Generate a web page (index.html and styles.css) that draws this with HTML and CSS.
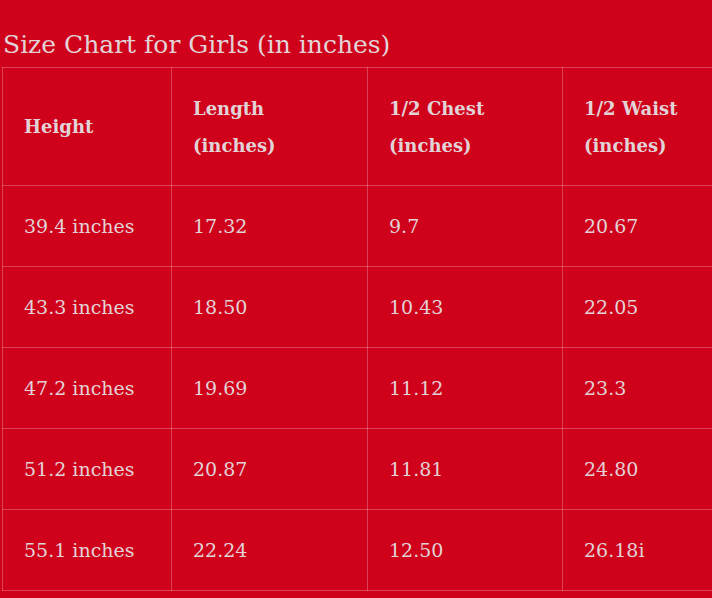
FILE: index.html
```html
<!DOCTYPE html>
<html>
<head>
<meta charset="utf-8">
<link rel="stylesheet" href="styles.css">
</head>
<body>
<div class="wrap">
  <h2 class="title">Size Chart for Girls (in inches)</h2>
  <table class="chart">
    <colgroup>
      <col class="c1"><col class="c2"><col class="c3"><col class="c4">
    </colgroup>
    <thead>
      <tr><th>Height</th><th>Length<br>(inches)</th><th>1/2 Chest<br>(inches)</th><th>1/2 Waist<br>(inches)</th></tr>
    </thead>
    <tbody>
      <tr><td>39.4 inches</td><td>17.32</td><td>9.7</td><td>20.67</td></tr>
      <tr><td>43.3 inches</td><td>18.50</td><td>10.43</td><td>22.05</td></tr>
      <tr><td>47.2 inches</td><td>19.69</td><td>11.12</td><td>23.3</td></tr>
      <tr><td>51.2 inches</td><td>20.87</td><td>11.81</td><td>24.80</td></tr>
      <tr><td>55.1 inches</td><td>22.24</td><td>12.50</td><td>26.18i</td></tr>
    </tbody>
  </table>
</div>
</body>
</html>
```
FILE: styles.css
```css
html, body {
  margin: 0;
  padding: 0;
  background: #d0011b;
  overflow: hidden;
}
.wrap {
  padding: 0 0 0 2px;
  width: 760px;
  color: #e2d3d7;
  font-family: "DejaVu Serif", "Liberation Serif", serif;
}
.title {
  margin: 0 0 7px 0;
  padding: 30px 0 0 1px;
  font-size: 25px;
  font-weight: normal;
  line-height: 30px;
}
.chart {
  border-collapse: collapse;
  table-layout: fixed;
  width: 756px;
}
.c1 { width: 169px; }
.c2 { width: 196px; }
.c3 { width: 195px; }
.c4 { width: 196px; }
.chart th, .chart td {
  border: 1px solid rgba(255, 255, 255, 0.25);
  text-align: left;
  vertical-align: middle;
  padding: 0 0 0 21px;
}
.chart th {
  height: 117px;
  font-size: 18px;
  font-weight: bold;
  line-height: 37px;
}
.chart td {
  height: 80px;
  font-size: 19px;
  line-height: 28px;
}
```
